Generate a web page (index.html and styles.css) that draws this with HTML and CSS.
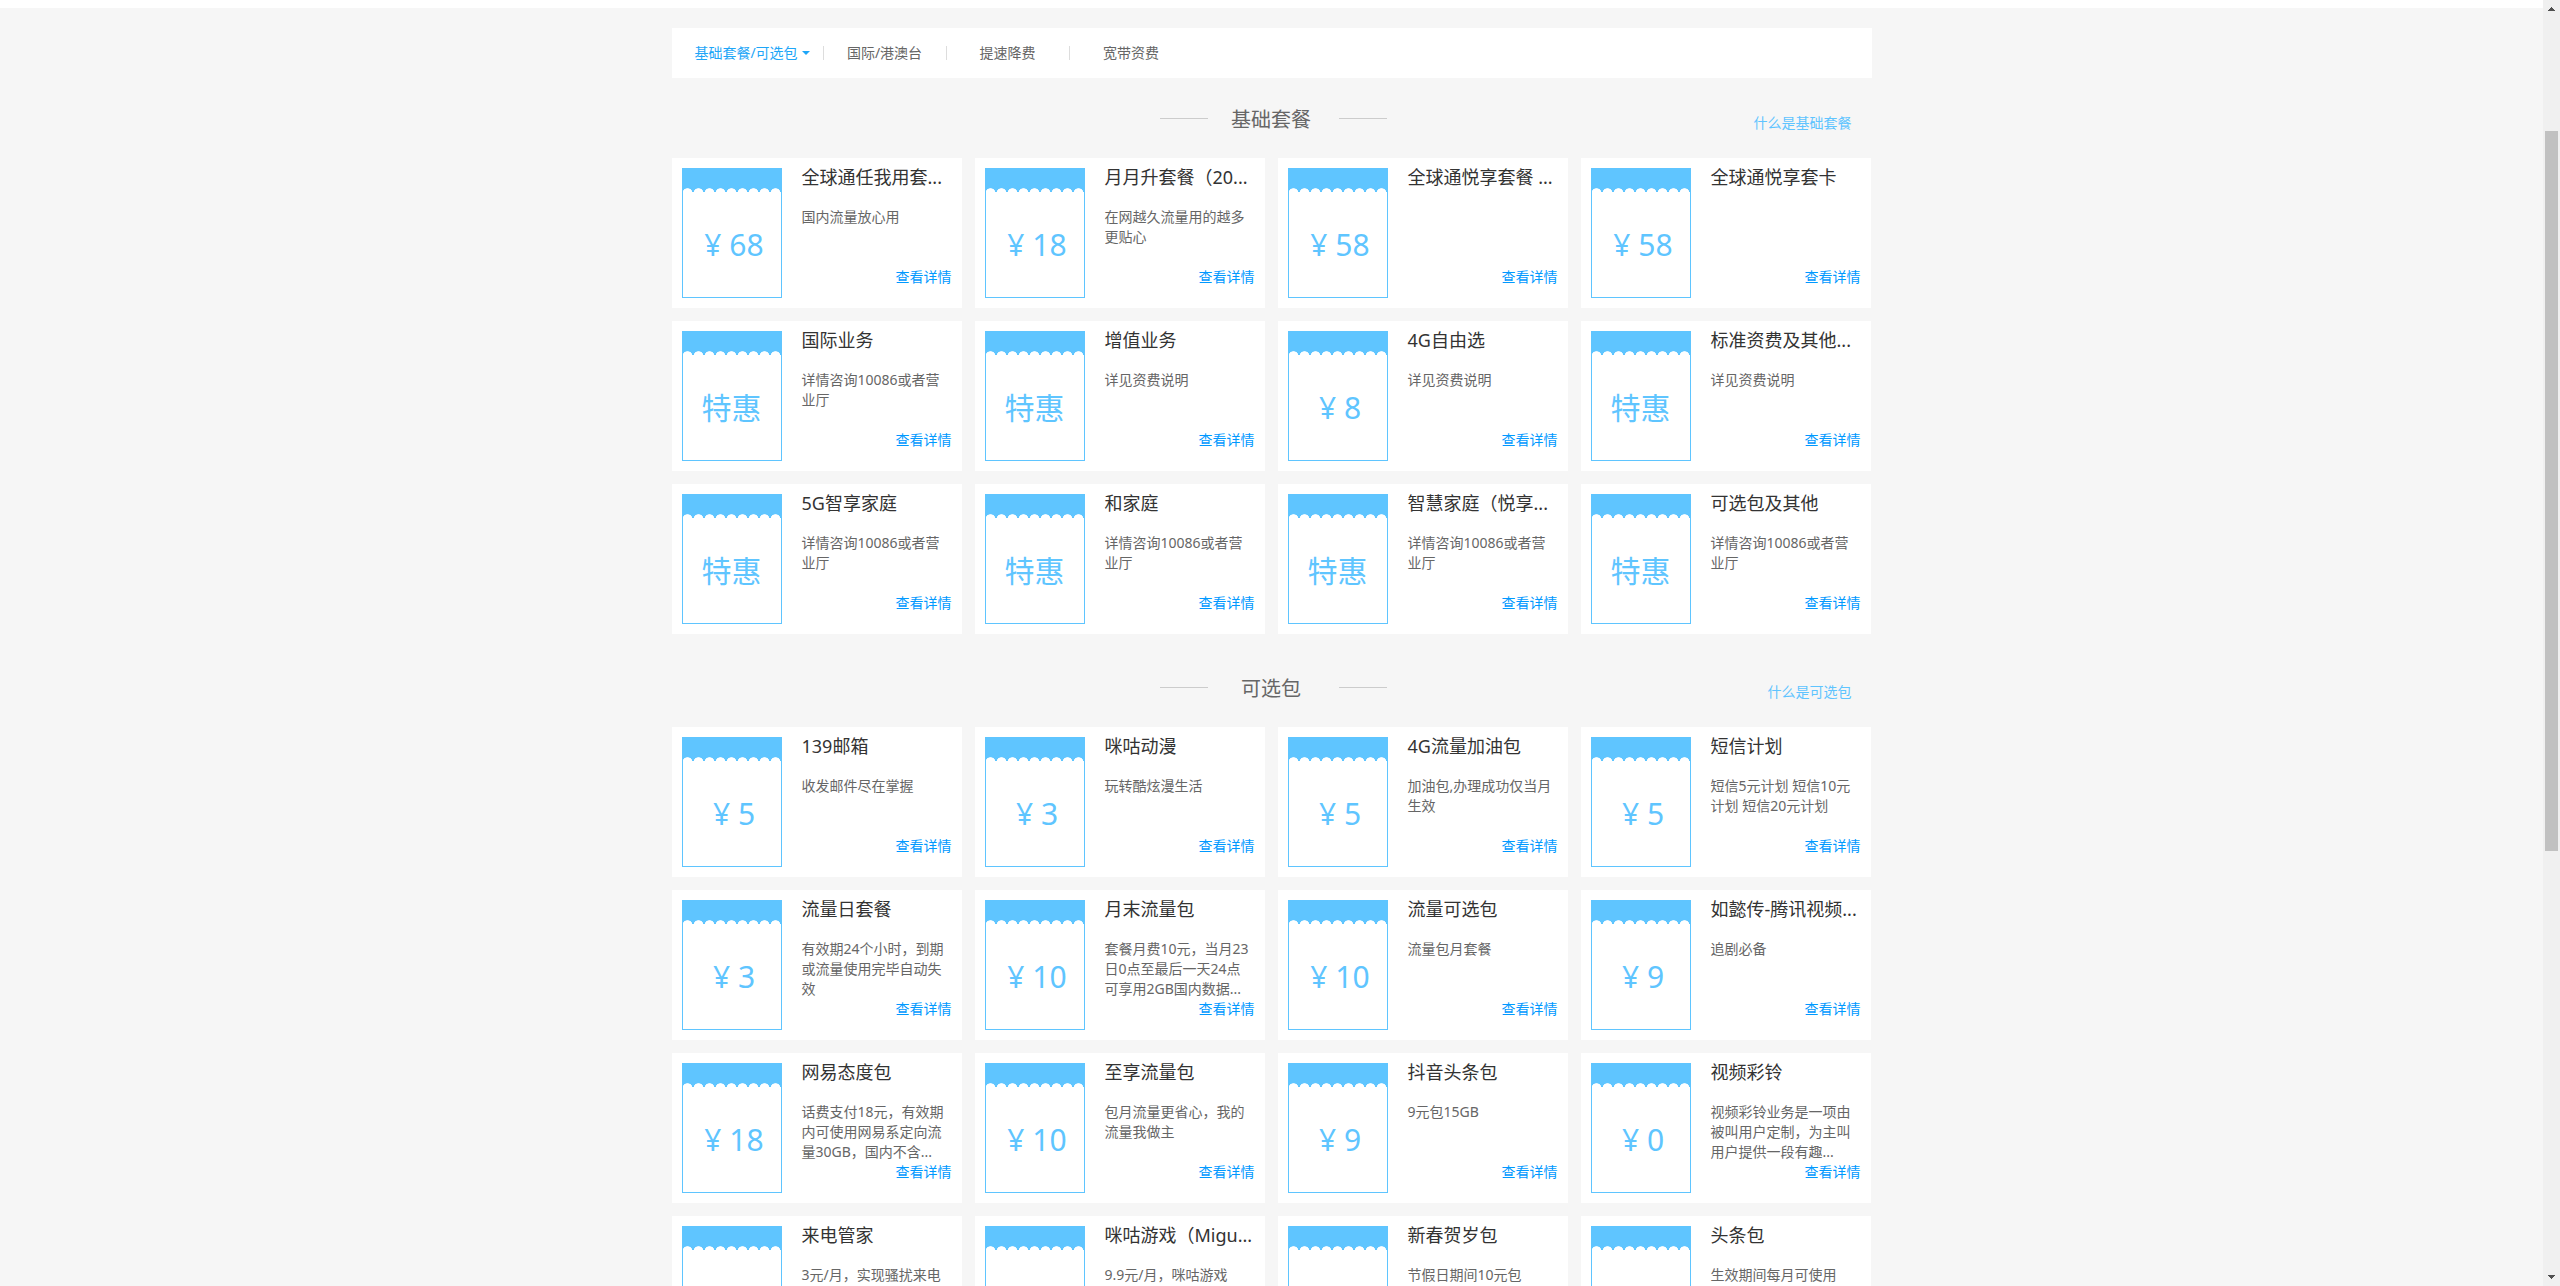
FILE: index.html
```html
<!DOCTYPE html>
<html lang="zh-CN">
<head>
<meta charset="utf-8">
<title>基础套餐/可选包</title>
<link rel="stylesheet" href="styles.css">
</head>
<body>
<div class="window">
<div class="page">
<header class="topbar"></header>
<main class="container">
<nav class="tabs">
<a class="tab tab-active" href="#basic">基础套餐/可选包<span class="caret"></span></a>
<a class="tab" href="#intl">国际/港澳台</a>
<a class="tab" href="#speed">提速降费</a>
<a class="tab" href="#broadband">宽带资费</a>
</nav>

<section class="section" id="basic">
<div class="section-head">
<span class="rule"></span><h2 class="section-title">基础套餐</h2><span class="rule"></span>
<a class="help" href="#help-basic">什么是基础套餐</a>
</div>
<div class="grid">
<article class="card"><div class="ticket"><span class="price"><span class="yuan">¥</span>68</span></div><div class="info"><h3 class="name">全球通任我用套...</h3><p class="desc">国内流量放心用</p><a class="more" href="#d">查看详情</a></div></article>
<article class="card"><div class="ticket"><span class="price"><span class="yuan">¥</span>18</span></div><div class="info"><h3 class="name">月月升套餐（20...</h3><p class="desc">在网越久流量用的越多更贴心</p><a class="more" href="#d">查看详情</a></div></article>
<article class="card"><div class="ticket"><span class="price"><span class="yuan">¥</span>58</span></div><div class="info"><h3 class="name">全球通悦享套餐 ...</h3><p class="desc"></p><a class="more" href="#d">查看详情</a></div></article>
<article class="card"><div class="ticket"><span class="price"><span class="yuan">¥</span>58</span></div><div class="info"><h3 class="name">全球通悦享套卡</h3><p class="desc"></p><a class="more" href="#d">查看详情</a></div></article>
<article class="card"><div class="ticket"><span class="price">特惠</span></div><div class="info"><h3 class="name">国际业务</h3><p class="desc">详情咨询10086或者营业厅</p><a class="more" href="#d">查看详情</a></div></article>
<article class="card"><div class="ticket"><span class="price">特惠</span></div><div class="info"><h3 class="name">增值业务</h3><p class="desc">详见资费说明</p><a class="more" href="#d">查看详情</a></div></article>
<article class="card"><div class="ticket"><span class="price"><span class="yuan">¥</span>8</span></div><div class="info"><h3 class="name">4G自由选</h3><p class="desc">详见资费说明</p><a class="more" href="#d">查看详情</a></div></article>
<article class="card"><div class="ticket"><span class="price">特惠</span></div><div class="info"><h3 class="name">标准资费及其他...</h3><p class="desc">详见资费说明</p><a class="more" href="#d">查看详情</a></div></article>
<article class="card"><div class="ticket"><span class="price">特惠</span></div><div class="info"><h3 class="name">5G智享家庭</h3><p class="desc">详情咨询10086或者营业厅</p><a class="more" href="#d">查看详情</a></div></article>
<article class="card"><div class="ticket"><span class="price">特惠</span></div><div class="info"><h3 class="name">和家庭</h3><p class="desc">详情咨询10086或者营业厅</p><a class="more" href="#d">查看详情</a></div></article>
<article class="card"><div class="ticket"><span class="price">特惠</span></div><div class="info"><h3 class="name">智慧家庭（悦享...</h3><p class="desc">详情咨询10086或者营业厅</p><a class="more" href="#d">查看详情</a></div></article>
<article class="card"><div class="ticket"><span class="price">特惠</span></div><div class="info"><h3 class="name">可选包及其他</h3><p class="desc">详情咨询10086或者营业厅</p><a class="more" href="#d">查看详情</a></div></article>
</div>
</section>

<section class="section" id="optional">
<div class="section-head">
<span class="rule"></span><h2 class="section-title">可选包</h2><span class="rule"></span>
<a class="help" href="#help-optional">什么是可选包</a>
</div>
<div class="grid">
<article class="card"><div class="ticket"><span class="price"><span class="yuan">¥</span>5</span></div><div class="info"><h3 class="name">139邮箱</h3><p class="desc">收发邮件尽在掌握</p><a class="more" href="#d">查看详情</a></div></article>
<article class="card"><div class="ticket"><span class="price"><span class="yuan">¥</span>3</span></div><div class="info"><h3 class="name">咪咕动漫</h3><p class="desc">玩转酷炫漫生活</p><a class="more" href="#d">查看详情</a></div></article>
<article class="card"><div class="ticket"><span class="price"><span class="yuan">¥</span>5</span></div><div class="info"><h3 class="name">4G流量加油包</h3><p class="desc">加油包,办理成功仅当月生效</p><a class="more" href="#d">查看详情</a></div></article>
<article class="card"><div class="ticket"><span class="price"><span class="yuan">¥</span>5</span></div><div class="info"><h3 class="name">短信计划</h3><p class="desc">短信5元计划 短信10元计划 短信20元计划</p><a class="more" href="#d">查看详情</a></div></article>
<article class="card"><div class="ticket"><span class="price"><span class="yuan">¥</span>3</span></div><div class="info"><h3 class="name">流量日套餐</h3><p class="desc">有效期24个小时，到期或流量使用完毕自动失效</p><a class="more" href="#d">查看详情</a></div></article>
<article class="card"><div class="ticket"><span class="price"><span class="yuan">¥</span>10</span></div><div class="info"><h3 class="name">月末流量包</h3><p class="desc">套餐月费10元，当月23日0点至最后一天24点可享用2GB国内数据...</p><a class="more" href="#d">查看详情</a></div></article>
<article class="card"><div class="ticket"><span class="price"><span class="yuan">¥</span>10</span></div><div class="info"><h3 class="name">流量可选包</h3><p class="desc">流量包月套餐</p><a class="more" href="#d">查看详情</a></div></article>
<article class="card"><div class="ticket"><span class="price"><span class="yuan">¥</span>9</span></div><div class="info"><h3 class="name">如懿传-腾讯视频...</h3><p class="desc">追剧必备</p><a class="more" href="#d">查看详情</a></div></article>
<article class="card"><div class="ticket"><span class="price"><span class="yuan">¥</span>18</span></div><div class="info"><h3 class="name">网易态度包</h3><p class="desc">话费支付18元，有效期内可使用网易系定向流量30GB，国内不含...</p><a class="more" href="#d">查看详情</a></div></article>
<article class="card"><div class="ticket"><span class="price"><span class="yuan">¥</span>10</span></div><div class="info"><h3 class="name">至享流量包</h3><p class="desc">包月流量更省心，我的流量我做主</p><a class="more" href="#d">查看详情</a></div></article>
<article class="card"><div class="ticket"><span class="price"><span class="yuan">¥</span>9</span></div><div class="info"><h3 class="name">抖音头条包</h3><p class="desc">9元包15GB</p><a class="more" href="#d">查看详情</a></div></article>
<article class="card"><div class="ticket"><span class="price"><span class="yuan">¥</span>0</span></div><div class="info"><h3 class="name">视频彩铃</h3><p class="desc">视频彩铃业务是一项由被叫用户定制，为主叫用户提供一段有趣...</p><a class="more" href="#d">查看详情</a></div></article>
<article class="card"><div class="ticket"></div><div class="info"><h3 class="name">来电管家</h3><p class="desc">3元/月，实现骚扰来电</p></div></article>
<article class="card"><div class="ticket"></div><div class="info"><h3 class="name">咪咕游戏（Migu...</h3><p class="desc">9.9元/月，咪咕游戏</p></div></article>
<article class="card"><div class="ticket"></div><div class="info"><h3 class="name">新春贺岁包</h3><p class="desc">节假日期间10元包</p></div></article>
<article class="card"><div class="ticket"></div><div class="info"><h3 class="name">头条包</h3><p class="desc">生效期间每月可使用</p></div></article>
</div>
</section>
</main>
</div>
<div class="scrollbar" aria-hidden="true">
<svg class="arrow" width="17" height="17" viewBox="0 0 17 17" shape-rendering="crispEdges"><path fill="#505050" d="M8 7h1v1h1v1h1v1h1v1H5v-1h1V9h1V8h1z"/></svg>
<div class="track"><div class="thumb"></div></div>
<svg class="arrow" width="17" height="17" viewBox="0 0 17 17" shape-rendering="crispEdges"><path fill="#505050" d="M5 6h7v1h-1v1h-1v1H9v1H8V9H7V8H6V7H5z"/></svg>
</div>
</div>
</body>
</html>
```
FILE: styles.css
```css
* { box-sizing: border-box; }

body {
  margin: 0;
  background: #f6f6f6;
  color: #666;
  font: 14px/20px "Noto Sans", "Noto Sans CJK SC", sans-serif;
}

a { text-decoration: none; }
h2, h3, p { margin: 0; font-weight: 400; }

.window {
  display: flex;
  height: 100vh;
  overflow: hidden;
}

.page {
  flex: 1;
  min-width: 0;
}

.topbar {
  height: 8px;
  background: #fff;
}

.container {
  width: 100%;
  max-width: 1200px;
  margin: 0 auto;
  padding-top: 20px;
}

/* category tabs */
.tabs {
  display: flex;
  align-items: center;
  min-height: 50px;
  padding-left: 10px;
  background: #fff;
}

.tab {
  display: flex;
  align-items: center;
  justify-content: center;
  width: 123px;
  height: 14px;
  border-right: 1px solid #ddd;
  color: #666;
}

.tab:last-child { border-right: 0; }

.tab-active {
  width: 142px;
  color: #1ea6f8;
}

.caret {
  margin-left: 4px;
  border: 4px solid transparent;
  border-top-color: currentColor;
  border-bottom: 0;
}

/* section heading */
.section { padding-bottom: 13px; }

.section-head {
  position: relative;
  display: flex;
  align-items: center;
  justify-content: center;
  height: 80px;
  padding-left: 3px;
}

.section-title {
  width: 131px;
  padding: 3px 4px 0 0;
  text-align: center;
  font-size: 20px;
  line-height: 30px;
}

.rule {
  width: 48px;
  height: 1px;
  background: #ccc;
}

.help {
  position: absolute;
  right: 20px;
  top: 35px;
  color: #5fc4ff;
}

/* plan cards */
.grid {
  display: grid;
  grid-template-columns: repeat(auto-fill, 290px);
  gap: 13px;
}

.card {
  display: flex;
  gap: 20px;
  min-height: 150px;
  padding: 10px;
  background: #fff;
}

.ticket {
  display: flex;
  flex-direction: column;
  flex: none;
  width: 100px;
  height: 130px;
  border: 1px solid #5fc5ff;
  color: #5fc5ff;
}

.ticket::before {
  content: "";
  height: 23px;
  background:
    radial-gradient(5px 4px at 50% 100%, #fff 85%, #5fc5ff 100%) -1px 100% / 11px 4px repeat-x,
    #5fc5ff;
}

.price {
  margin: auto;
  font-size: 30px;
  line-height: 40px;
}

.yuan {
  display: inline-block;
  width: 30px;
  padding-left: 5px;
}

.info {
  display: flex;
  flex-direction: column;
  flex: 1;
  min-width: 0;
}

.name {
  margin-bottom: 21px;
  color: #333;
  font-size: 18px;
  line-height: 18px;
  white-space: nowrap;
}

.desc { height: 60px; }

.more {
  align-self: flex-end;
  color: #09f;
}

/* window scrollbar */
.scrollbar {
  display: flex;
  flex-direction: column;
  width: 17px;
  background: #f0f0f0;
}

.arrow { flex: none; }

.track {
  flex: 1;
  padding: 114px 2px 0;
}

.thumb {
  height: 720px;
  background: #c1c1c1;
}
```
